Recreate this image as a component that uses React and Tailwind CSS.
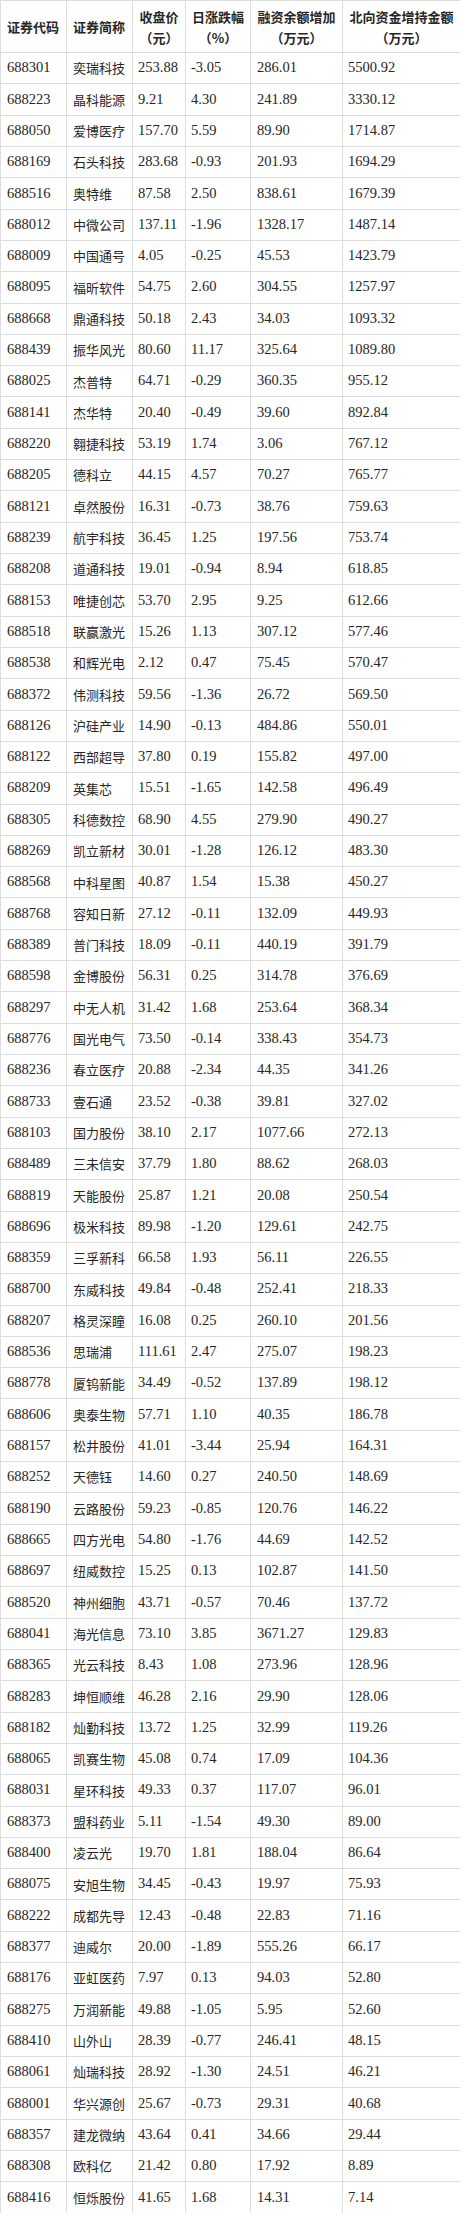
import React from "react";

// code, name, close, change %, margin increase, northbound increase
const rows = [
  ["688301", "奕瑞科技", "253.88", "-3.05", "286.01", "5500.92"],
  ["688223", "晶科能源", "9.21", "4.30", "241.89", "3330.12"],
  ["688050", "爱博医疗", "157.70", "5.59", "89.90", "1714.87"],
  ["688169", "石头科技", "283.68", "-0.93", "201.93", "1694.29"],
  ["688516", "奥特维", "87.58", "2.50", "838.61", "1679.39"],
  ["688012", "中微公司", "137.11", "-1.96", "1328.17", "1487.14"],
  ["688009", "中国通号", "4.05", "-0.25", "45.53", "1423.79"],
  ["688095", "福昕软件", "54.75", "2.60", "304.55", "1257.97"],
  ["688668", "鼎通科技", "50.18", "2.43", "34.03", "1093.32"],
  ["688439", "振华风光", "80.60", "11.17", "325.64", "1089.80"],
  ["688025", "杰普特", "64.71", "-0.29", "360.35", "955.12"],
  ["688141", "杰华特", "20.40", "-0.49", "39.60", "892.84"],
  ["688220", "翱捷科技", "53.19", "1.74", "3.06", "767.12"],
  ["688205", "德科立", "44.15", "4.57", "70.27", "765.77"],
  ["688121", "卓然股份", "16.31", "-0.73", "38.76", "759.63"],
  ["688239", "航宇科技", "36.45", "1.25", "197.56", "753.74"],
  ["688208", "道通科技", "19.01", "-0.94", "8.94", "618.85"],
  ["688153", "唯捷创芯", "53.70", "2.95", "9.25", "612.66"],
  ["688518", "联赢激光", "15.26", "1.13", "307.12", "577.46"],
  ["688538", "和辉光电", "2.12", "0.47", "75.45", "570.47"],
  ["688372", "伟测科技", "59.56", "-1.36", "26.72", "569.50"],
  ["688126", "沪硅产业", "14.90", "-0.13", "484.86", "550.01"],
  ["688122", "西部超导", "37.80", "0.19", "155.82", "497.00"],
  ["688209", "英集芯", "15.51", "-1.65", "142.58", "496.49"],
  ["688305", "科德数控", "68.90", "4.55", "279.90", "490.27"],
  ["688269", "凯立新材", "30.01", "-1.28", "126.12", "483.30"],
  ["688568", "中科星图", "40.87", "1.54", "15.38", "450.27"],
  ["688768", "容知日新", "27.12", "-0.11", "132.09", "449.93"],
  ["688389", "普门科技", "18.09", "-0.11", "440.19", "391.79"],
  ["688598", "金博股份", "56.31", "0.25", "314.78", "376.69"],
  ["688297", "中无人机", "31.42", "1.68", "253.64", "368.34"],
  ["688776", "国光电气", "73.50", "-0.14", "338.43", "354.73"],
  ["688236", "春立医疗", "20.88", "-2.34", "44.35", "341.26"],
  ["688733", "壹石通", "23.52", "-0.38", "39.81", "327.02"],
  ["688103", "国力股份", "38.10", "2.17", "1077.66", "272.13"],
  ["688489", "三未信安", "37.79", "1.80", "88.62", "268.03"],
  ["688819", "天能股份", "25.87", "1.21", "20.08", "250.54"],
  ["688696", "极米科技", "89.98", "-1.20", "129.61", "242.75"],
  ["688359", "三孚新科", "66.58", "1.93", "56.11", "226.55"],
  ["688700", "东威科技", "49.84", "-0.48", "252.41", "218.33"],
  ["688207", "格灵深瞳", "16.08", "0.25", "260.10", "201.56"],
  ["688536", "思瑞浦", "111.61", "2.47", "275.07", "198.23"],
  ["688778", "厦钨新能", "34.49", "-0.52", "137.89", "198.12"],
  ["688606", "奥泰生物", "57.71", "1.10", "40.35", "186.78"],
  ["688157", "松井股份", "41.01", "-3.44", "25.94", "164.31"],
  ["688252", "天德钰", "14.60", "0.27", "240.50", "148.69"],
  ["688190", "云路股份", "59.23", "-0.85", "120.76", "146.22"],
  ["688665", "四方光电", "54.80", "-1.76", "44.69", "142.52"],
  ["688697", "纽威数控", "15.25", "0.13", "102.87", "141.50"],
  ["688520", "神州细胞", "43.71", "-0.57", "70.46", "137.72"],
  ["688041", "海光信息", "73.10", "3.85", "3671.27", "129.83"],
  ["688365", "光云科技", "8.43", "1.08", "273.96", "128.96"],
  ["688283", "坤恒顺维", "46.28", "2.16", "29.90", "128.06"],
  ["688182", "灿勤科技", "13.72", "1.25", "32.99", "119.26"],
  ["688065", "凯赛生物", "45.08", "0.74", "17.09", "104.36"],
  ["688031", "星环科技", "49.33", "0.37", "117.07", "96.01"],
  ["688373", "盟科药业", "5.11", "-1.54", "49.30", "89.00"],
  ["688400", "凌云光", "19.70", "1.81", "188.04", "86.64"],
  ["688075", "安旭生物", "34.45", "-0.43", "19.97", "75.93"],
  ["688222", "成都先导", "12.43", "-0.48", "22.83", "71.16"],
  ["688377", "迪威尔", "20.00", "-1.89", "555.26", "66.17"],
  ["688176", "亚虹医药", "7.97", "0.13", "94.03", "52.80"],
  ["688275", "万润新能", "49.88", "-1.05", "5.95", "52.60"],
  ["688410", "山外山", "28.39", "-0.77", "246.41", "48.15"],
  ["688061", "灿瑞科技", "28.92", "-1.30", "24.51", "46.21"],
  ["688001", "华兴源创", "25.67", "-0.73", "29.31", "40.68"],
  ["688357", "建龙微纳", "43.64", "0.41", "34.66", "29.44"],
  ["688308", "欧科亿", "21.42", "0.80", "17.92", "8.89"],
  ["688416", "恒烁股份", "41.65", "1.68", "14.31", "7.14"],
];

const num = "font-['Liberation_Serif',serif] text-[14.5px]";
const cjk = "font-['Noto_Sans_CJK_SC',sans-serif] text-[13px]";

const App = () => {
  return (
    <div className="w-[460px] bg-white text-[#262626]">
      <table className="w-full table-fixed border-collapse">
        <colgroup>
          <col className="w-[66px]" />
          <col className="w-[66px]" />
          <col className="w-[53px]" />
          <col className="w-[65px]" />
          <col className="w-[92px]" />
          <col className="w-[118px]" />
        </colgroup>
        <thead>
          <tr className="h-[52px] font-['Noto_Sans_CJK_SC',sans-serif] text-[13px] font-bold leading-[21px]">
            <th className="border border-[#dedede] pl-[6px] text-left">证券代码</th>
            <th className="border border-[#dedede] pl-[6px] text-left">证券简称</th>
            <th className="border border-[#dedede] text-center">
              收盘价
              <br />
              （元）
            </th>
            <th className="border border-[#dedede] text-center">
              日涨跌幅
              <br />
              （%）
            </th>
            <th className="border border-[#dedede] text-center">
              融资余额增加
              <br />
              （万元）
            </th>
            <th className="border border-[#dedede] text-center">
              北向资金增持金额
              <br />
              （万元）
            </th>
          </tr>
        </thead>
        <tbody>
          {rows.map((r) => (
            <tr key={r[0]} className="h-[31.32px]">
              <td className={`border border-[#dedede] pl-[6px] p-0 ${num}`}>{r[0]}</td>
              <td className={`border border-[#dedede] pl-[6px] p-0 whitespace-nowrap ${cjk}`}>{r[1]}</td>
              <td className={`border border-[#dedede] pl-[5px] p-0 ${num}`}>{r[2]}</td>
              <td className={`border border-[#dedede] pl-[5px] p-0 ${num}`}>{r[3]}</td>
              <td className={`border border-[#dedede] pl-[6px] p-0 ${num}`}>{r[4]}</td>
              <td className={`border border-[#dedede] pl-[5px] p-0 ${num}`}>{r[5]}</td>
            </tr>
          ))}
        </tbody>
      </table>
    </div>
  );
};

export default App;
